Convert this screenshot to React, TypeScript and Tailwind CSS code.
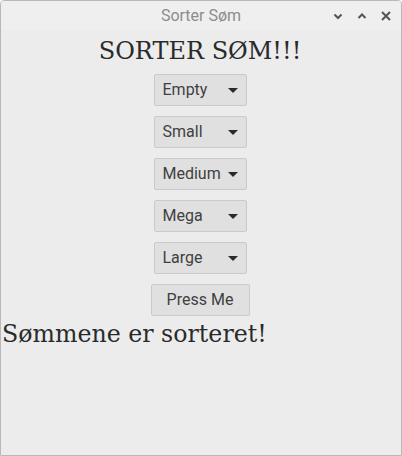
import { useState } from "react";

const sizes = ["Empty", "Small", "Medium", "Mega", "Large"];

function Dropdown({ label }: { label: string }) {
  return (
    <div className="flex items-center justify-between w-[93px] h-[32px] pl-[8px] pr-[8px] bg-[#e0e0e0] border border-[#cacaca] rounded-[2px] text-[16px] text-[#404040]">
      <span>{label}</span>
      <svg width="10" height="5" viewBox="0 0 10 5" className="ml-1 shrink-0">
        <path d="M0 0h10L5 5z" fill="#2a2a2a" />
      </svg>
    </div>
  );
}

export default function App() {
  const [done] = useState(true);

  return (
    <div className="w-[402px] h-[456px] bg-[#ececec] border border-[#b8b8b8] rounded-t-[4px] flex flex-col overflow-hidden font-['Roboto',sans-serif]">
      {/* Title bar */}
      <div className="relative h-[29px] shrink-0 flex items-center justify-center bg-[#efefef]">
        <span className="text-[16px] text-[#8c8c8c]">Sorter Søm</span>
        <div className="absolute right-[8px] top-0 h-full flex items-center gap-[10px]">
          <svg width="14" height="14" viewBox="0 0 14 14">
            <path d="M3.5 5.5L7 9l3.5-3.5" stroke="#555" strokeWidth="2" fill="none" />
          </svg>
          <svg width="14" height="14" viewBox="0 0 14 14">
            <path d="M3.5 9L7 5.5 10.5 9" stroke="#555" strokeWidth="2" fill="none" />
          </svg>
          <svg width="14" height="14" viewBox="0 0 14 14">
            <path d="M3 3l8 8M11 3l-8 8" stroke="#555" strokeWidth="2" fill="none" />
          </svg>
        </div>
      </div>

      {/* Content */}
      <div className="flex flex-col items-center pt-[4px] pr-[2px]">
        <h1 className="font-['DejaVu_Serif',serif] text-[24px] leading-[34px] text-[#2a2a2a]">SORTER SØM!!!</h1>
        <div className="flex flex-col items-center gap-[10px] mt-[6px]">
          {sizes.map((s) => (
            <Dropdown key={s} label={s} />
          ))}
          <button className="w-[99px] h-[32px] bg-[#e0e0e0] border border-[#cacaca] rounded-[2px] text-[16px] text-[#404040]">
            Press Me
          </button>
        </div>
      </div>
      {done && (
        <p className="font-['DejaVu_Serif',serif] text-[23.7px] leading-[30px] text-[#2a2a2a] pl-[1px] mt-[3px]">
          Sømmene er sorteret!
        </p>
      )}
    </div>
  );
}
